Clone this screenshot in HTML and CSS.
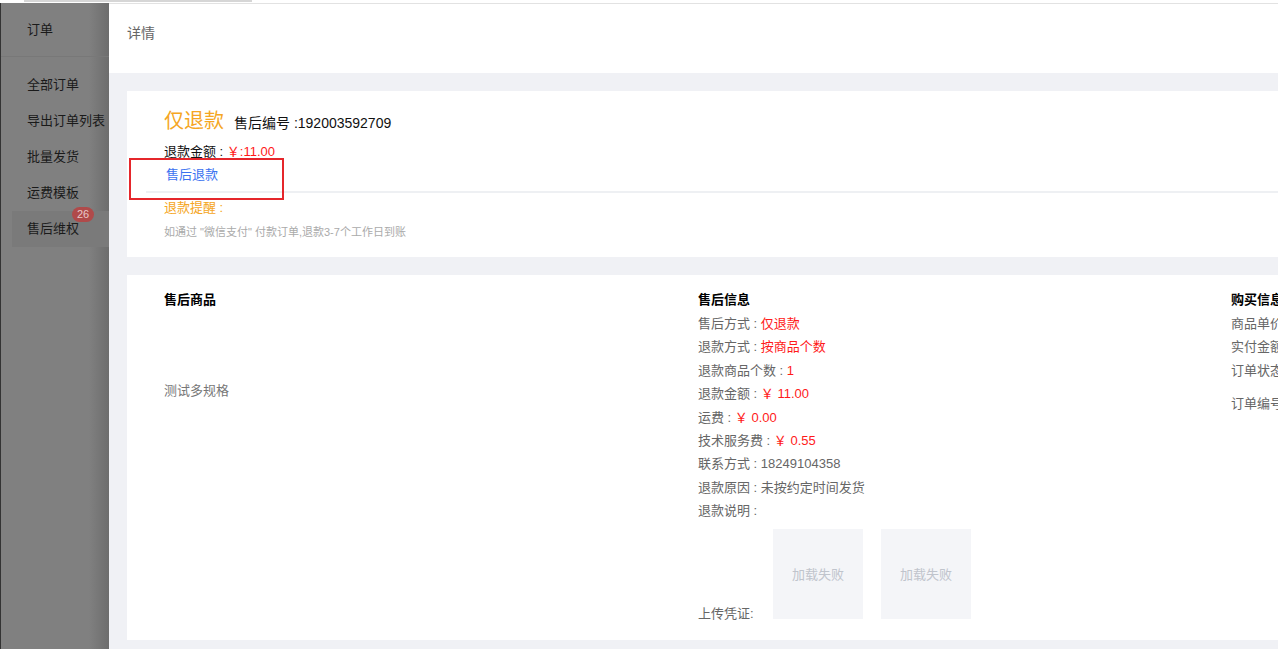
FILE: index.html
```html
<!DOCTYPE html>
<html lang="zh-CN">
<head>
<meta charset="utf-8">
<title>详情</title>
<link rel="stylesheet" href="styles.css">
</head>
<body>
<div class="topstrip"><div class="topbar"></div></div>
<div class="layout">
  <aside class="sidebar">
    <div class="side-title">订单</div>
    <ul class="side-list">
      <li class="side-item">全部订单</li>
      <li class="side-item">导出订单列表</li>
      <li class="side-item">批量发货</li>
      <li class="side-item">运费模板</li>
      <li class="side-item active">售后维权<span class="badge">26</span></li>
    </ul>
  </aside>
  <main class="main">
    <header class="page-head">详情</header>
    <div class="content">
      <section class="card card-top">
        <div class="title-row"><span class="type">仅退款</span><span class="sn">售后编号 :192003592709</span></div>
        <div class="amount-row">退款金额 : <span class="red">￥:11.00</span></div>
        <div class="tabs"><span class="tab">售后退款</span></div>
        <div class="remind">退款提醒 :</div>
        <div class="tip">如通过 "微信支付" 付款订单,退款3-7个工作日到账</div>
        <div class="mark"></div>
      </section>
      <section class="card card-info">
        <div class="col">
          <div class="col-head">售后商品</div>
          <div class="goods-name">测试多规格</div>
        </div>
        <div class="col">
          <div class="col-head">售后信息</div>
          <div class="row">售后方式 : <span class="red">仅退款</span></div>
          <div class="row">退款方式 : <span class="red">按商品个数</span></div>
          <div class="row">退款商品个数 : <span class="red">1</span></div>
          <div class="row">退款金额 : <span class="red">￥ 11.00</span></div>
          <div class="row">运费 : <span class="red">￥ 0.00</span></div>
          <div class="row">技术服务费 : <span class="red">￥ 0.55</span></div>
          <div class="row">联系方式 : 18249104358</div>
          <div class="row">退款原因 : 未按约定时间发货</div>
          <div class="row">退款说明 :</div>
          <div class="proof">
            <span class="proof-label">上传凭证:</span>
            <div class="img-fail">加载失败</div>
            <div class="img-fail">加载失败</div>
          </div>
        </div>
        <div class="col">
          <div class="col-head">购买信息</div>
          <div class="row">商品单价 : ￥ 11.00</div>
          <div class="row">实付金额 : ￥ 11.00</div>
          <div class="row">订单状态 : 已付款</div>
          <div class="row gap">订单编号 : 1920035927</div>
        </div>
      </section>
    </div>
  </main>
</div>
</body>
</html>
```
FILE: styles.css
```css
* { box-sizing: border-box; }
html, body { margin: 0; padding: 0; }
body {
  width: 1278px;
  height: 650px;
  overflow: hidden;
  background: #fff;
  font-family: "Liberation Sans", "Noto Sans CJK SC", sans-serif;
  font-size: 13px;
  color: #333;
}
.topstrip {
  height: 4px;
  position: relative;
  border-bottom: 1px solid #e2e2e2;
  margin-left: 109px;
}
.topbar {
  position: absolute;
  left: -85px;
  top: 0;
  width: 228px;
  height: 2px;
  background: #d6d6d6;
}
.layout {
  display: flex;
  height: 646px;
  margin-top: -1px;
}
.sidebar {
  width: 109px;
  flex: none;
  background: linear-gradient(to right, #808080 0, #808080 88px, #6c6c6c 109px);
  border-left: 1px solid #333;
  color: #1a1a1a;
  font-size: 13px;
}
.side-title {
  height: 54px;
  line-height: 53px;
  padding-left: 26px;
  border-bottom: 1px solid #787878;
}
.side-list {
  list-style: none;
  margin: 0;
  padding: 10px 0 0;
}
.side-item {
  position: relative;
  height: 36px;
  line-height: 36px;
  margin-left: 11px;
  padding-left: 15px;
  white-space: nowrap;
}
.side-item.active { background: #7a7a7a; }
.badge {
  position: absolute;
  left: 60px;
  top: -4px;
  height: 15px;
  line-height: 15px;
  padding: 0 5px;
  border-radius: 8px;
  background: #b04a4a;
  color: #e8c9c9;
  font-size: 11px;
}
.main {
  flex: 1;
  min-width: 0;
  display: flex;
  flex-direction: column;
  background: #f0f1f5;
}
.page-head {
  height: 70px;
  line-height: 60px;
  padding-left: 18px;
  background: #fff;
  color: #666;
  font-size: 14px;
}
.content {
  padding: 18px 0 0 18px;
  display: flex;
  flex-direction: column;
  gap: 18px;
}
.card {
  background: #fff;
  position: relative;
}
.card-top {
  height: 166px;
  padding: 16px 0 0 37px;
}
.title-row {
  display: flex;
  align-items: baseline;
  gap: 10px;
  line-height: 28px;
}
.type { color: #f5a623; font-size: 20px; }
.sn { color: #111; font-size: 14px; }
.amount-row {
  margin-top: 5px;
  line-height: 20px;
  font-size: 13px;
  color: #111;
}
.red { color: #ff1a1a; }
.tabs {
  margin: 1px 0 0 -18px;
  padding: 0 0 4px 20px;
  border-bottom: 2px solid #eef0f3;
}
.tab {
  display: inline-block;
  line-height: 24px;
  color: #3b72f0;
}
.remind {
  margin-top: 5px;
  line-height: 20px;
  color: #f5a623;
}
.tip {
  margin-top: 5px;
  line-height: 18px;
  font-size: 11px;
  color: #aaa;
}
.mark {
  position: absolute;
  left: 2px;
  top: 67px;
  width: 155px;
  height: 42px;
  border: 2px solid #e5262b;
}
.card-info {
  height: 365px;
  padding: 15px 0 0 37px;
  display: grid;
  grid-template-columns: 534px 533px 1fr;
  white-space: nowrap;
  overflow: hidden;
}
.col-head {
  line-height: 20px;
  margin-bottom: 2px;
  font-weight: bold;
  color: #000;
}
.goods-name {
  margin-top: 71px;
  line-height: 20px;
  color: #777;
}
.row {
  line-height: 23.4px;
  color: #666;
}
.row.gap { margin-top: 10px; }
.proof {
  display: flex;
  align-items: flex-end;
  gap: 18px;
  margin-top: 6px;
}
.proof-label {
  width: 57px;
  line-height: 20px;
  margin-bottom: -5px;
  color: #666;
}
.img-fail {
  width: 90px;
  height: 90px;
  background: #f4f5f8;
  color: #c0c4cc;
  display: flex;
  align-items: center;
  justify-content: center;
}
```
